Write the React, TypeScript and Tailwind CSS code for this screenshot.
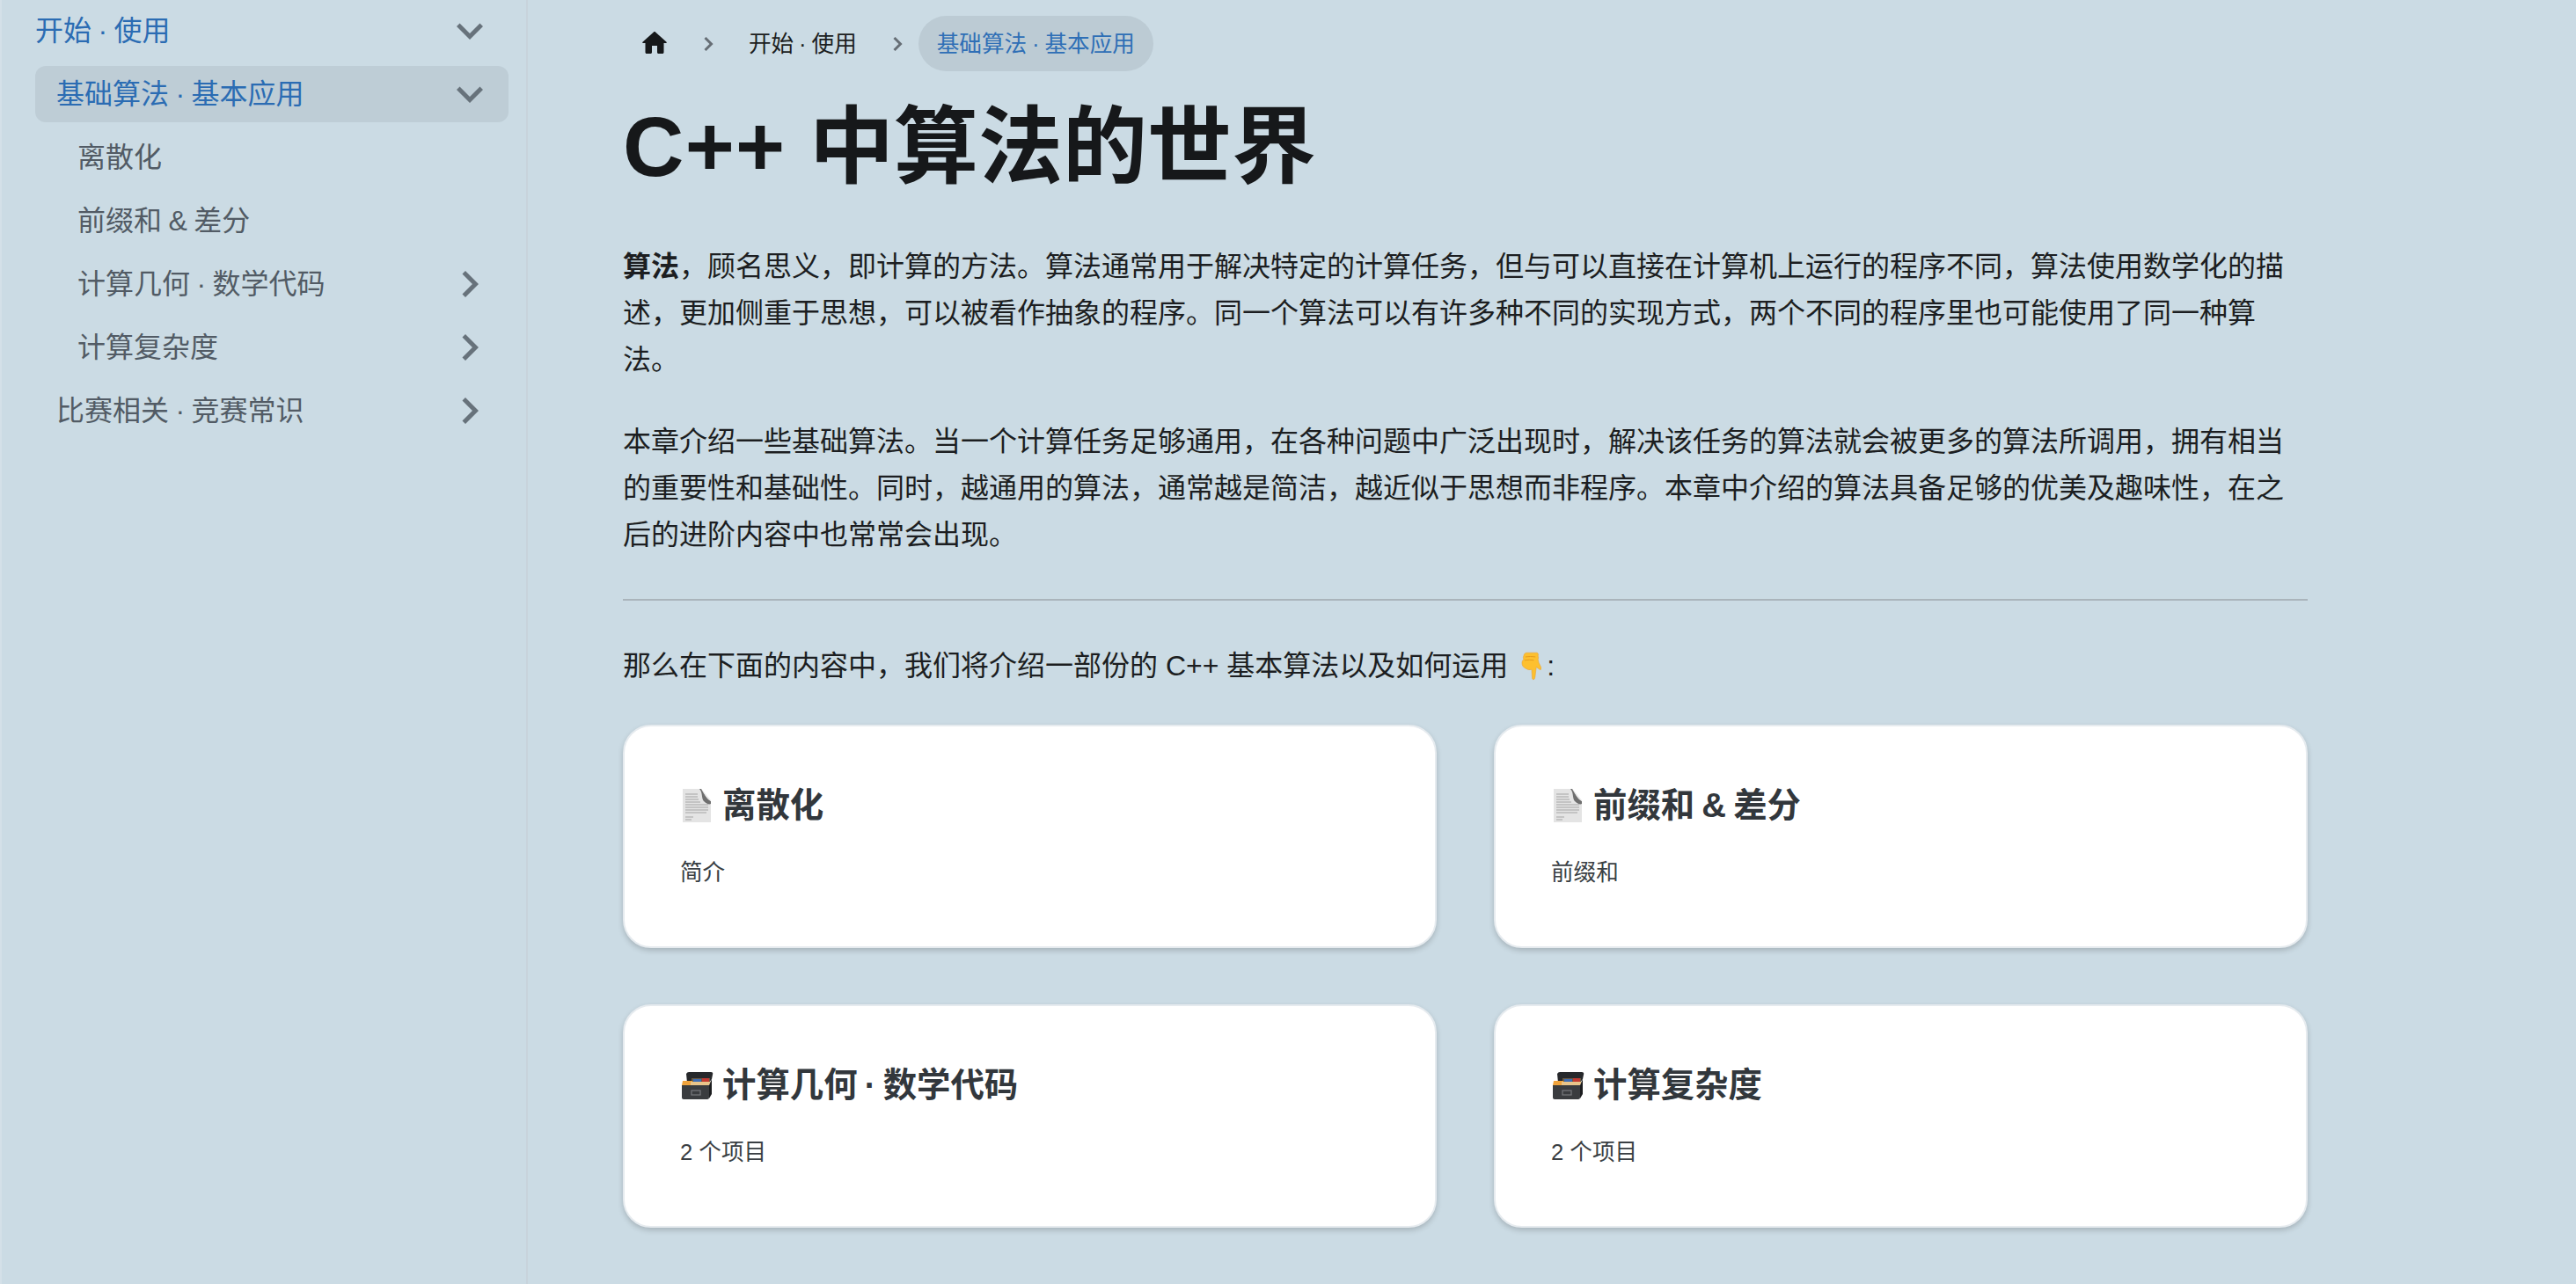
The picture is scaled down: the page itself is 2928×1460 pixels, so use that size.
import type { ReactNode } from 'react'

const CHEVRON = 'M7.41 8.59L12 13.17l4.59-4.58L18 10l-6 6-6-6 1.41-1.41z'

function Chevron({ right }: { right?: boolean }) {
  return (
    <svg viewBox="0 0 24 24" className={right ? 'w-[60px] h-[60px] -rotate-90 shrink-0' : 'w-[60px] h-[60px] shrink-0'}>
      <path d={CHEVRON} fill="#67727b" />
    </svg>
  )
}

function Crumb() {
  return (
    <svg viewBox="0 0 12 18" className="w-[12px] h-[18px] mt-[1px] shrink-0">
      <path d="M2.5 2 L9.5 9 L2.5 16" fill="none" stroke="#666e75" strokeWidth="3" />
    </svg>
  )
}

function SideItem({ label, className, chevron }: { label: string; className: string; chevron?: 'down' | 'right' }) {
  return (
    <div className={`flex items-center justify-between h-[64px] rounded-[12px] pr-[14px] ${className}`}>
      <span className="[word-spacing:-1.5px]">{label}</span>
      {chevron && <Chevron right={chevron === 'right'} />}
    </div>
  )
}

function FileEmoji() {
  return (
    <svg viewBox="0 0 38 40" className="w-[38px] h-[40px] mr-[10px] shrink-0">
      <path d="M3 1 H24 L35 15 V39 H3 Z" fill="#e4e4e4" />
      <g stroke="#b9b9b9" strokeWidth="1.4">
        <path d="M6 7 H20 M6 10 H20 M6 13 H21 M6 16 H23 M6 19 H32 M6 22 H32 M6 25 H32 M6 28 H30 M6 33 H15 M6 36 H13" />
      </g>
      <path d="M24 1 L35 15 L27 15 Z" fill="#d8d8d8" />
      <path d="M22 1 C26 5 24 12 27 15 C30 18 33 19 35 18 L35 15 C31 12 28 8 24 1 Z" fill="#6f6f6f" />
      <path d="M24 1 L35 14 L35 15 C30 13 28 7 24 1 Z" fill="#e9e9e9" />
    </svg>
  )
}

function BoxEmoji() {
  return (
    <svg viewBox="0 0 38 40" className="w-[38px] h-[40px] mr-[10px] shrink-0">
      <path d="M7 7 Q8 5 10 5 H35 Q38 5 37 8 L36 13 L33 17 H8 Z" fill="#26282b" />
      <path d="M13 12 H34 V16 H13 Z" fill="#6a5a43" />
      <path d="M15 13 H24 V16 H15 Z" fill="#3d6db5" />
      <path d="M25 12 H33 V16 H25 Z" fill="#c23a32" />
      <path d="M3 15 H14 L15 20 H2 Z" fill="#f0a33c" />
      <path d="M12 16 H35 L33 20 H12 Z" fill="#e8c48a" />
      <path d="M2 20 H33 V34 Q33 36 31 36 H4 Q2 36 2 34 Z" fill="#3a3c3f" />
      <path d="M33 20 L36 13 V30 L33 35 Z" fill="#1c1d1f" />
      <rect x="13" y="26" width="10" height="5" fill="none" stroke="#77797c" strokeWidth="1.2" />
    </svg>
  )
}

function HandEmoji() {
  return (
    <svg viewBox="0 0 24 34" className="inline-block w-[23px] h-[33px] mx-[6px] align-[-6px]">
      <path
        d="M6 1 H19 Q21 2 20 5 Q21 7 20 9 L21 13 L24 19 Q24 22 22 21 L18 18 L16.5 30 Q16 33 14.5 33 Q13 33 13 30 L12.5 21 Q9 22 6 20 Q1 18 1 13 Q1 10 3 9 Q2 6 3 5 Q3 2 6 1 Z"
        fill="#fdc02f"
        stroke="#e9a33a"
        strokeWidth="0.6"
      />
      <path d="M5 6 Q11 5 17 6 M4 10 Q10 9 15 10" fill="none" stroke="#e49a1d" strokeWidth="1" />
    </svg>
  )
}

function Card({ icon, title, desc }: { icon: ReactNode; title: string; desc: string }) {
  return (
    <div className="h-[254px] bg-white rounded-[32px] border-2 border-[#e6ebef] shadow-[0_3px_6px_0_rgba(0,0,0,0.18)] px-[63px] pt-[64px]">
      <div className="flex items-center h-[52px] text-[38.4px] leading-[52px] font-bold text-[#32373c]">
        {icon}
        <span className="[word-spacing:-2.5px]">{title}</span>
      </div>
      <p className="mt-[29px] text-[25.6px] leading-[42px] text-[#3a3f44]">{desc}</p>
    </div>
  )
}

export default function App() {
  return (
    <div className="flex h-[1460px] overflow-hidden bg-[#cbdbe4] text-[32px] leading-[52.8px] text-[#1c1e21] font-['Liberation_Sans','Noto_Sans_CJK_SC',sans-serif]">
      <aside className="w-[600px] shrink-0 border-l-2 border-l-[#d4e0e8] border-r-2 border-r-[#c8d3db] pl-[38px] pr-[20px] pt-[3px] flex flex-col gap-[8px]">
        <SideItem label="开始 · 使用" chevron="down" className="text-[#2b6cb3]" />
        <SideItem label="基础算法 · 基本应用" chevron="down" className="pl-[24px] bg-[#becdd6] text-[#2b6cb3]" />
        <SideItem label="离散化" className="pl-[48px] text-[#525b65]" />
        <SideItem label="前缀和 & 差分" className="pl-[48px] text-[#525b65]" />
        <SideItem label="计算几何 · 数学代码" chevron="right" className="pl-[48px] text-[#525b65]" />
        <SideItem label="计算复杂度" chevron="right" className="pl-[48px] text-[#525b65]" />
        <SideItem label="比赛相关 · 竞赛常识" chevron="right" className="pl-[24px] text-[#525b65]" />
      </aside>

      <main className="w-[1915px] ml-[108px] pt-[18px]">
        <nav className="flex items-center h-[63px] text-[25.6px]">
          <svg viewBox="0 0 24 24" className="w-[36px] h-[36px] ml-[18px] mb-[2px] shrink-0">
            <path
              d="M10 19v-5h4v5c0 .55.45 1 1 1h3c.55 0 1-.45 1-1v-7h1.7c.46 0 .68-.57.33-.87L12.67 3.6c-.38-.34-.96-.34-1.34 0l-8.36 7.53c-.34.3-.13.87.33.87H5v7c0 .55.45 1 1 1h3c.55 0 1-.45 1-1z"
              fill="#16181a"
            />
          </svg>
          <div className="ml-[37px]"><Crumb /></div>
          <span className="ml-[40px] pt-[2px] [word-spacing:-1.2px]">开始 · 使用</span>
          <div className="ml-[40px]"><Crumb /></div>
          <span className="ml-[18px] flex items-center h-[63px] px-[21px] pt-[2px] rounded-full bg-[#bccbd4] text-[#2f6fb6] [word-spacing:-1.2px]">基础算法 · 基本应用</span>
        </nav>

        <h1 className="mt-[26px] text-[96px] leading-[120px] font-bold text-[#16181a]">
          <span className="tracking-[1.3px]">C++</span> 中算法的世界
        </h1>

        <p className="mt-[50px] w-[1914px]">
          <strong>算法</strong>，顾名思义，即计算的方法。算法通常用于解决特定的计算任务，但与可以直接在计算机上运行的程序不同，算法使用数学化的描述，更加侧重于思想，可以被看作抽象的程序。同一个算法可以有许多种不同的实现方式，两个不同的程序里也可能使用了同一种算法。
        </p>
        <p className="mt-[41px] w-[1914px]">
          本章介绍一些基础算法。当一个计算任务足够通用，在各种问题中广泛出现时，解决该任务的算法就会被更多的算法所调用，拥有相当的重要性和基础性。同时，越通用的算法，通常越是简洁，越近似于思想而非程序。本章中介绍的算法具备足够的优美及趣味性，在之后的进阶内容中也常常会出现。
        </p>

        <hr className="mt-[46px] h-[2px] border-0 bg-[#aab4bb]" />

        <p className="mt-[48px]">
          那么在下面的内容中，我们将介绍一部份的 C++ 基本算法以及如何运用 <HandEmoji />:
        </p>

        <div className="mt-[40px] grid grid-cols-2 gap-x-[65px] gap-y-[64px]">
          <Card icon={<FileEmoji />} title="离散化" desc="简介" />
          <Card icon={<FileEmoji />} title="前缀和 & 差分" desc="前缀和" />
          <Card icon={<BoxEmoji />} title="计算几何 · 数学代码" desc="2 个项目" />
          <Card icon={<BoxEmoji />} title="计算复杂度" desc="2 个项目" />
        </div>
      </main>
    </div>
  )
}
